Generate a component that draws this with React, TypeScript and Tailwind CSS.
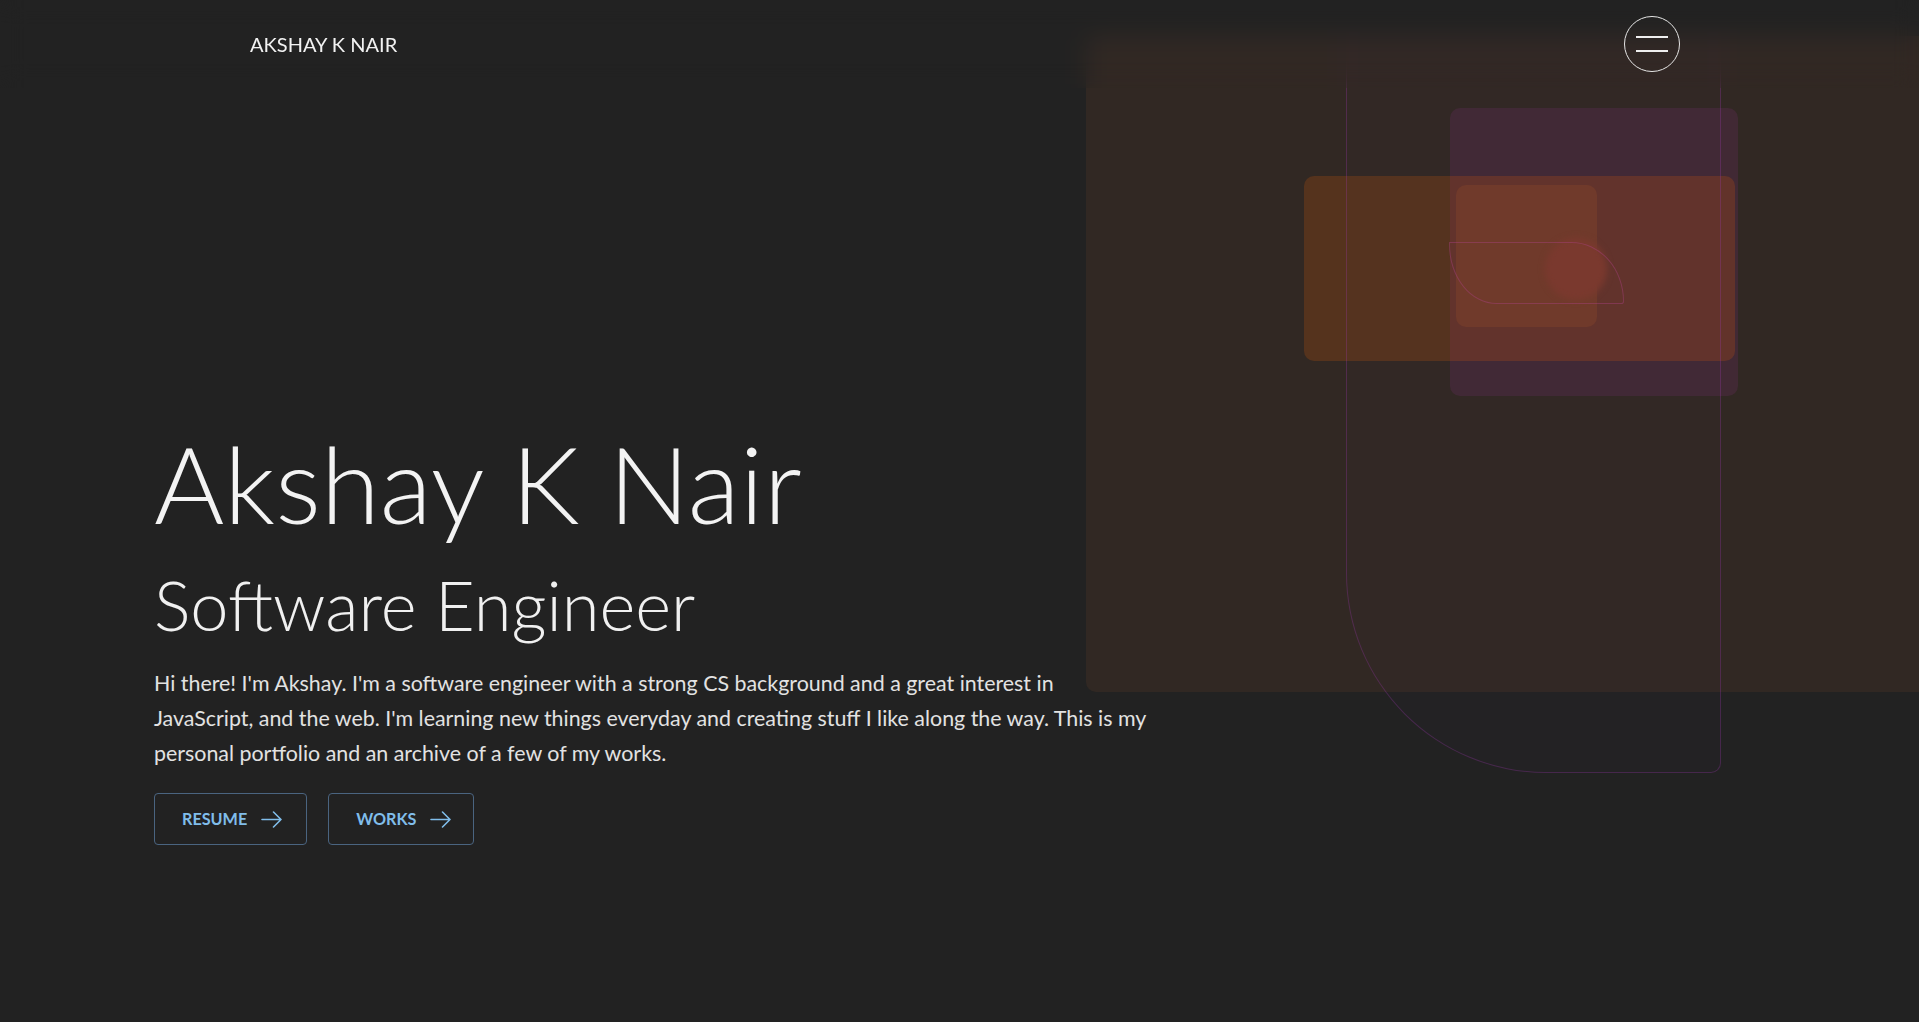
import React from "react";

const Arrow = () => (
  <svg width="21" height="17" viewBox="0 0 21 17" fill="none" stroke="currentColor" strokeWidth="1.6" strokeLinecap="round" strokeLinejoin="round">
    <path d="M1 8.5H20M12.5 1L20 8.5L12.5 16" />
  </svg>
);

export default function App() {
  return (
    <div className="relative min-h-screen overflow-hidden bg-[#222222] font-['Lato','Noto_Sans',sans-serif] text-[#eeeeee]">
      {/* decorative canvas */}
      <div className="pointer-events-none absolute inset-0 z-0">
        <div className="absolute left-[1086px] top-[36px] right-0 h-[656px] rounded-l-[10px] bg-[#312823]" />
        <div className="absolute left-[1450px] top-[108px] h-[288px] w-[288px] rounded-[10px] bg-[#412934]" />
        <div className="absolute left-[1304px] top-[176px] h-[185px] w-[431px] rounded-[10px] bg-[rgba(229,94,5,0.2)]" />
        <div className="absolute left-[1456px] top-[185px] h-[142px] w-[141px] rounded-[10px] bg-[#703a29]" />
        <div className="absolute left-[1545px] top-[238px] h-[62px] w-[62px] rounded-full bg-[#7a392c] blur-[3px]" />
        <div className="absolute left-[1449px] top-[242px] h-[62px] w-[175px] rounded-tr-[55px_62px] rounded-bl-[50px_62px] rounded-br-[3px] border-[1.5px] border-[rgba(180,66,140,0.38)]" />
        <div className="absolute left-[1346px] top-[36px] h-[737px] w-[375px] rounded-bl-[200px] rounded-br-[10px] border border-t-0 border-[rgba(154,54,170,0.3)] bg-[rgba(154,54,170,0.015)]" />
      </div>

      {/* header */}
      <header className="sticky top-0 z-20 flex h-[88px] items-center justify-between pl-[250px] pr-[239px] backdrop-blur-md">
        <a className="text-[20px] font-normal leading-none text-[#f2f2f2]">AKSHAY K NAIR</a>
        <button className="flex h-[56px] w-[56px] flex-col items-center justify-center gap-[12px] rounded-full border border-[#e6e6e6]">
          <span className="block h-[2px] w-[32px] bg-[#eeeeee]" />
          <span className="block h-[2px] w-[32px] bg-[#eeeeee]" />
        </button>
      </header>

      {/* hero */}
      <main className="relative z-10 pl-[154px] pt-[341px] pb-[177px]">
        <h1 className="text-[107.4px] font-light leading-none text-[#f3f3f3]">Akshay K Nair</h1>
        <h2 className="mt-[35px] text-[68.6px] font-light leading-none text-[#f0f0f0]">Software Engineer</h2>
        <p className="mt-[26px] text-[21.4px] font-normal leading-[35px] text-[#e2e2e2]">
          <span className="block whitespace-nowrap">Hi there! I'm Akshay. I'm a software engineer with a strong CS background and a great interest in</span>
          <span className="block whitespace-nowrap">JavaScript, and the web. I'm learning new things everyday and creating stuff I like along the way. This is my</span>
          <span className="block whitespace-nowrap">personal portfolio and an archive of a few of my works.</span>
        </p>
        <div className="mt-[22px] flex gap-[21px]">
          <a className="flex h-[52px] items-center gap-[14px] rounded-[4px] border border-[#4a6480] pl-[27px] pr-[24px] text-[16.2px] font-bold text-[#80bdea]">
            <span>RESUME</span>
            <Arrow />
          </a>
          <a className="flex h-[52px] items-center gap-[14px] rounded-[4px] border border-[#4a6480] pl-[27px] pr-[22px] text-[16.2px] font-bold text-[#80bdea]">
            <span>WORKS</span>
            <Arrow />
          </a>
        </div>
      </main>
    </div>
  );
}
